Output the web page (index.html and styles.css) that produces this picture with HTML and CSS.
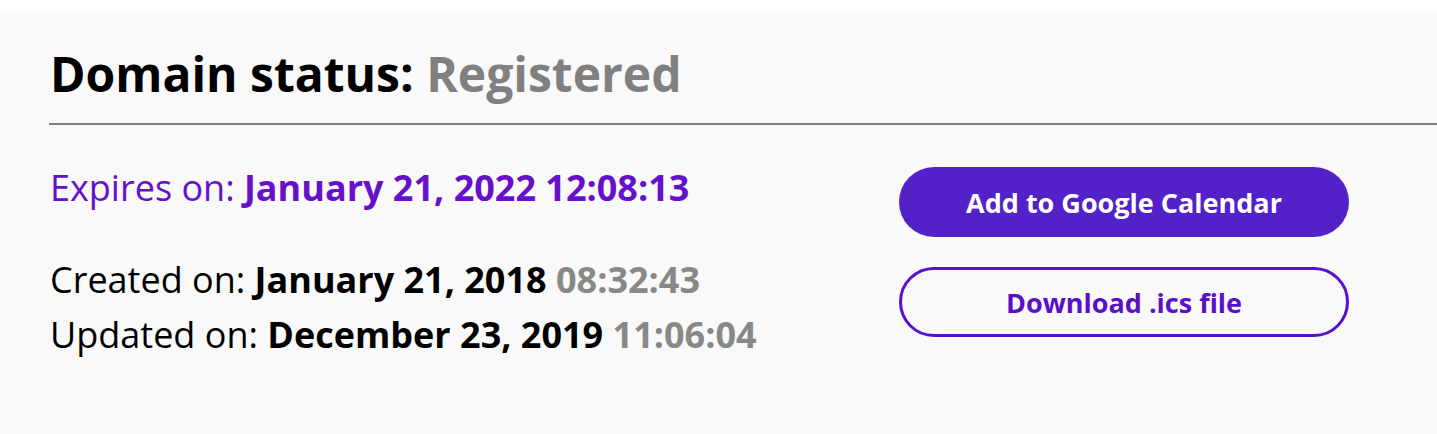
FILE: index.html
```html
<!DOCTYPE html>
<html>
<head>
<meta charset="utf-8">
<link rel="stylesheet" href="styles.css">
</head>
<body>
<section class="panel">
  <h1 class="title">Domain status: <span class="status">Registered</span></h1>
  <div class="content">
    <div class="dates">
      <p class="expires">Expires on: <b>January 21, 2022 12:08:13</b></p>
      <p class="line">Created on: <b>January 21, 2018</b> <b class="time">08:32:43</b></p>
      <p class="line">Updated on: <b>December 23, 2019</b> <b class="time">11:06:04</b></p>
    </div>
    <div class="actions">
      <a class="btn btn-primary">Add to Google Calendar</a>
      <a class="btn btn-outline">Download .ics file</a>
    </div>
  </div>
</section>
</body>
</html>
```

FILE: styles.css
```css
html, body {
  margin: 0;
  padding: 0;
  background: #ffffff;
  font-family: "Open Sans", "Noto Sans", sans-serif;
}
.panel {
  margin-top: 11px;
  background: #f9f9f9;
  height: 423px;
  padding-left: 49px;
  box-sizing: border-box;
}
.title {
  margin: 0;
  padding-top: 32px;
  padding-left: 1px;
  padding-bottom: 18px;
  font-size: 48px;
  line-height: 62px;
  font-weight: 700;
  color: #000;
  border-bottom: 2px solid #808080;
}
.status {
  color: #808080;
}
.content {
  display: flex;
  padding-top: 35px;
}
.dates {
  width: 849px;
  padding-left: 1px;
}
.dates p {
  margin: 0;
  font-size: 36px;
  line-height: 55px;
  color: #000;
}
.expires {
  color: #6610cc !important;
  margin-bottom: 37px !important;
}
.time {
  color: #888888;
}
.actions {
  display: flex;
  flex-direction: column;
  gap: 30px;
  padding-top: 7px;
}
.btn {
  display: flex;
  align-items: center;
  justify-content: center;
  box-sizing: border-box;
  width: 450px;
  height: 70px;
  border-radius: 35px;
  font-size: 27px;
  font-weight: 700;
}
.btn-primary {
  background: #5222c8;
  color: #fff;
}
.btn-outline {
  border: 3px solid #5a0fcc;
  color: #5a0fc8;
  background: transparent;
}
```
